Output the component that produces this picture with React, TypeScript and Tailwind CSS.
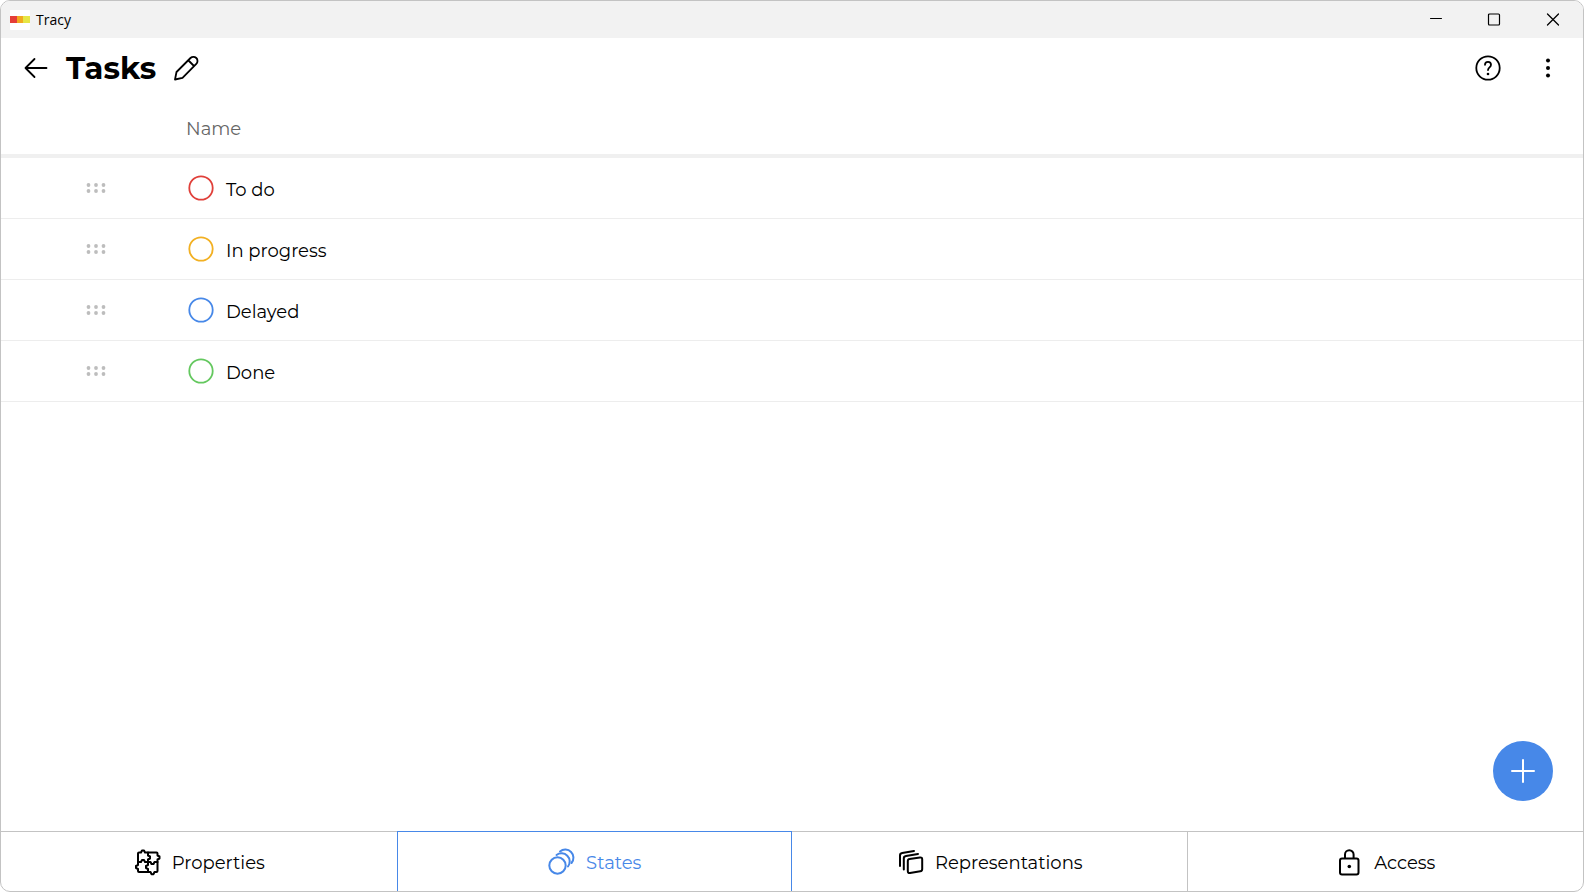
import type { ReactNode } from 'react'

const states = [
    { name: 'To do', color: '#e0403a' },
    { name: 'In progress', color: '#f2b022' },
    { name: 'Delayed', color: '#4788e8' },
    { name: 'Done', color: '#64c85f' },
]

function Icon({ size = 28, width = 2, children }: { size?: number; width?: number; children: ReactNode }) {
    return (
        <svg width={size} height={size} viewBox={`0 0 ${size} ${size}`} fill="none" stroke="currentColor" strokeWidth={width} strokeLinecap="round" strokeLinejoin="round" aria-hidden="true">
            {children}
        </svg>
    )
}

function TitleBar() {
    return (
        <div className="h-[37px] shrink-0 flex items-center justify-between bg-[#f2f2f2] pl-[9px]">
            <div className="flex items-center gap-[6px]">
                <svg width="20" height="20" viewBox="0 0 20 20" aria-hidden="true">
                    <rect width="20" height="20" rx="1" fill="#fff" />
                    <rect y="6" width="7" height="7" fill="#e53e38" />
                    <rect x="7" y="6" width="6" height="7" fill="#f2a91f" />
                    <rect x="13" y="6" width="7" height="7" fill="#e6e645" />
                </svg>
                <span className="font-['Open_Sans',sans-serif] text-[14px] leading-5">Tracy</span>
            </div>
            <div className="flex h-full">
                <button aria-label="Minimize" className="w-[58px] flex items-center justify-center">
                    <Icon size={14} width={1}><path d="M1.5 5.5h11" /></Icon>
                </button>
                <button aria-label="Maximize" className="w-[58px] flex items-center justify-center">
                    <Icon size={14} width={1.2}><rect x="1.5" y="1" width="11" height="11" rx="1" /></Icon>
                </button>
                <button aria-label="Close" className="w-[60px] flex items-center justify-center">
                    <Icon size={14} width={1.3}><path d="M1.5 1l11 11M12.5 1l-11 11" /></Icon>
                </button>
            </div>
        </div>
    )
}

function Header() {
    return (
        <header className="h-[60px] shrink-0 flex items-center justify-between pl-5 pr-[21px]">
            <div className="flex items-center">
                <button aria-label="Back" className="mr-[15px]">
                    <Icon size={30} width={1.8}><path d="M25.500 15H5M13.500 6L4.500 15l9 9" /></Icon>
                </button>
                <h1 className="text-[31px] leading-10 font-bold">Tasks</h1>
                <button aria-label="Rename" className="ml-4">
                    <Icon size={28} width={1.8}>
                        <path d="M3 25.500l1.500-7.500L18.500 4a4 4 0 0 1 5.800 5.800L10.500 23.800zM16.500 6.500l5.500 5.500" />
                    </Icon>
                </button>
            </div>
            <div className="flex items-center gap-8">
                <button aria-label="Help">
                    <Icon size={28} width={1.8}>
                        <circle cx="14" cy="14" r="11.700" />
                        <path d="M11 10.800a3 3 0 0 1 6 0c0 2.500-3 2.700-3 5.300" />
                        <circle cx="14" cy="20" r="1.300" fill="currentColor" stroke="none" />
                    </Icon>
                </button>
                <button aria-label="More">
                    <svg width="28" height="28" viewBox="0 0 28 28" fill="currentColor" aria-hidden="true">
                        <circle cx="14" cy="6.500" r="2" />
                        <circle cx="14" cy="14" r="2" />
                        <circle cx="14" cy="21.500" r="2" />
                    </svg>
                </button>
            </div>
        </header>
    )
}

function StateTable() {
    return (
        <table className="w-full border-separate border-spacing-0">
            <thead className="text-[#666]">
                <tr className="h-[60px]">
                    <th className="w-[185px] border-b-4 border-[#f0f0f0]" aria-label="Order" />
                    <th className="border-b-4 border-[#f0f0f0] pt-1.5 text-left font-normal">Name</th>
                </tr>
            </thead>
            <tbody>
                {states.map(state => (
                    <tr key={state.name} className="h-[61px]">
                        <td className="border-b border-[#ededed]">
                            <button aria-label={`Move ${state.name}`} className="ml-[84px] block cursor-grab text-[#bdbdbd]">
                                <svg width="22" height="12" viewBox="0 0 22 12" fill="currentColor" aria-hidden="true">
                                    {[3.5, 11, 18.5].map(x => [3, 9].map(y => <circle key={`${x}-${y}`} cx={x} cy={y} r="1.900" />))}
                                </svg>
                            </button>
                        </td>
                        <td className="border-b border-[#ededed]">
                            <div className="flex items-center gap-3">
                                <svg width="28" height="28" viewBox="0 0 28 28" fill="none" stroke={state.color} strokeWidth="1.800" aria-hidden="true">
                                    <circle cx="15" cy="14" r="11.700" />
                                </svg>
                                <span className="pt-1">{state.name}</span>
                            </div>
                        </td>
                    </tr>
                ))}
            </tbody>
        </table>
    )
}

function Tab({ label, active, children }: { label: string; active?: boolean; children: ReactNode }) {
    return (
        <button
            aria-current={active ? 'page' : undefined}
            className={`flex items-center justify-center gap-[11px] border-t ${active ? 'border-x border-x-[#4788e8] border-t-[#4788e8] text-[#4788e8]' : 'border-t-[#c3c3c3]'}`}
        >
            <Icon>{children}</Icon>
            <span className="pt-0.5">{label}</span>
        </button>
    )
}

export default function App() {
    return (
        <div className="h-screen flex flex-col overflow-hidden rounded-[10px] border border-[#c3c3c3] bg-white text-black font-['Montserrat','Inter',sans-serif] text-[18px] leading-6">
            <TitleBar />
            <Header />
            <main className="relative flex-1">
                <StateTable />
                <button aria-label="Add state" className="absolute right-[30px] bottom-[30px] size-[60px] rounded-full bg-[#4788e8] text-white flex items-center justify-center">
                    <Icon size={28} width={2}><path d="M14 3v22M3 14h22" /></Icon>
                </button>
            </main>
            <nav className="h-[60px] shrink-0 grid grid-cols-4">
                <Tab label="Properties">
                    <path d="M5 5.500q0-1 1-1H8l1-2h2l1 2H23.500q1 0 1 1V7.500l2 1v2l-2 1V23q0 1-1 1H21.500l-1 2.200h-2l-1-2.200H6q-1 0-1-1V21l-2-1v-2l2-1z" />
                    <path d="M15 4.500v3l2 1v2l-2 1V17l-2 1v2l2 1v3" />
                    <path d="M5 14h3l1-2h2l1 2H17.500l1 2h2l1-2h3" />
                </Tab>
                <Tab label="States" active>
                    <circle cx="10.500" cy="17.500" r="8.200" />
                    <path d="M9.500 7A8.200 8.200 0 0 1 21 18.500" />
                    <path d="M13 3.400A8.200 8.200 0 0 1 24.500 15" />
                </Tab>
                <div className="grid border-r border-[#c3c3c3]">
                    <Tab label="Representations">
                        <path d="M13.500 11l10.500-1.500q2.200-.300 2.200 2v9.500q0 2-1.900 2.300L14 25q-2.200.300-2.200-2V13.200q0-2 1.700-2.200z" />
                        <path d="M7.800 21.500V10.500q0-2 2.200-2.400L22 6" />
                        <path d="M4 18V7.500q0-2 2.200-2.400L18 3" />
                    </Tab>
                </div>
                <Tab label="Access">
                    <rect x="5" y="10.500" width="18.500" height="16" rx="2" />
                    <path d="M10 10V6.500a4.300 4.300 0 0 1 8.600 0V10" />
                    <circle cx="14.300" cy="18.500" r="1.800" fill="currentColor" stroke="none" />
                </Tab>
            </nav>
        </div>
    )
}
